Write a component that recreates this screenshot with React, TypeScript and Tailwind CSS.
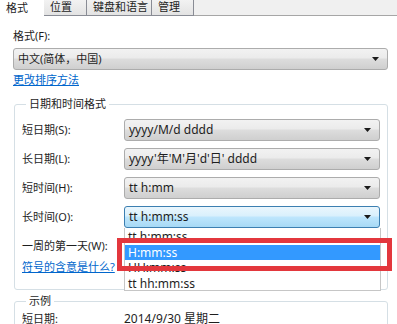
const font = { fontFamily: '"Noto Sans", "Noto Sans CJK SC", sans-serif' };

function Arrow() {
  return (
    <svg width="7" height="4" viewBox="0 0 7 4" className="shrink-0">
      <path d="M0 0H7L3.5 4Z" fill="#1a1a1a" />
    </svg>
  );
}

function Combo({ text, focused = false, cjk = false }: { text: string; focused?: boolean; cjk?: boolean }) {
  const skin = focused
    ? "border-[#3c7fb1] bg-[linear-gradient(#eaf6fd_0%,#d9f0fc_45%,#bee6fd_50%,#a7d9f5_100%)]"
    : "border-[#acacac] bg-[linear-gradient(#f2f2f2_0%,#ebebeb_45%,#dddddd_50%,#cfcfcf_100%)]";
  return (
    <div
      className={`flex h-[22px] flex-1 items-center rounded-[3px] border pl-[4px] pr-[8px] text-[#1e1e1e] ${cjk ? "text-[11px]" : "text-[12px]"} ${skin}`}
    >
      <span className="flex-1 whitespace-nowrap leading-[18px]">{text}</span>
      <Arrow />
    </div>
  );
}

function Row({ label, value, focused }: { label: string; value: string; focused?: boolean }) {
  return (
    <div className="flex h-[22px] items-center">
      <span className="w-[102px] text-[11px] text-[#1e1e1e]">{label}</span>
      <Combo text={value} focused={focused} />
    </div>
  );
}

function Tab({ label, width, active = false }: { label: string; width: string; active?: boolean }) {
  return active ? (
    <div className={`relative z-10 -mb-px flex h-[17px] items-center bg-white pl-[6px] text-[11px] text-[#1e1e1e] ${width}`}>
      {label}
    </div>
  ) : (
    <div
      className={`flex h-[16px] items-center border-r border-b border-[#898c95] bg-[linear-gradient(#f2f2f2,#e3e3e3)] pl-[6px] text-[11px] text-[#1e1e1e] ${width}`}
    >
      {label}
    </div>
  );
}

export default function App() {
  return (
    <div className="relative h-[324px] w-[397px] overflow-hidden bg-white" style={font}>
      <div className="flex h-[16px] border-b border-[#a6a6a6] bg-[#f0f0f0]">
        <Tab label="格式" width="w-[44px]" active />
        <Tab label="位置" width="w-[43px]" />
        <Tab label="键盘和语言" width="w-[65px]" />
        <Tab label="管理" width="w-[42px]" />
      </div>

      <div className="flex flex-col pr-[9px] pl-[13px]">
        <div className="mt-[12px] h-[16px] text-[11px] leading-[16px] text-[#1e1e1e]">格式(F):</div>
        <div className="mt-[4px] flex">
          <Combo text="中文(简体，中国)" cjk />
        </div>
        <div className="mt-[2px] h-[16px] text-[11px] leading-[16px] text-[#0066cc] underline">更改排序方法</div>

        <fieldset className="mt-[8px] ml-px rounded-[3px] border border-[#d5dfe5] px-[7px] pb-[14px]">
          <legend className="ml-[4px] h-[16px] px-[3px] text-[11px] leading-[16px] text-[#1e1e1e]">日期和时间格式</legend>
          <div className="mt-[7px] flex flex-col gap-[7px]">
            <Row label="短日期(S):" value="yyyy/M/d dddd" />
            <Row label="长日期(L):" value="yyyy'年'M'月'd'日' dddd" />
            <Row label="短时间(H):" value="tt h:mm" />
            <Row label="长时间(O):" value="tt h:mm:ss" focused />
            <Row label="一周的第一天(W):" value="星期一" />
          </div>
          <div className="mt-[2px] h-[16px] text-[11px] leading-[16px] text-[#0066cc] underline">符号的含意是什么?</div>
        </fieldset>

        <fieldset className="mt-[3px] ml-px rounded-[3px] border border-[#d5dfe5] px-[7px] pb-[10px]">
          <legend className="ml-[4px] h-[16px] px-[3px] text-[11px] leading-[16px] text-[#1e1e1e]">示例</legend>
          <div className="mt-[2px] flex h-[16px] items-center text-[11px] text-[#1e1e1e]">
            <span className="w-[102px]">短日期:</span>
            <span className="text-[12px]">2014/9/30 星期二</span>
          </div>
        </fieldset>
      </div>

      {/* open dropdown list */}
      <div className="absolute top-[228px] left-[124px] flex h-[63px] w-[257px] flex-col border border-t-0 border-[#c6c6c6] bg-white pt-px text-[12px] text-[#1e1e1e]">
        <div className="flex h-[16px] items-center pl-[3px]">tt h:mm:ss</div>
        <div className="flex h-[15px] items-center bg-[#3399ff] pl-[3px] text-white">H:mm:ss</div>
        <div className="flex h-[16px] items-center pl-[3px]">HH:mm:ss</div>
        <div className="flex h-[15px] items-center pl-[3px]">tt hh:mm:ss</div>
      </div>

      {/* red highlight frame */}
      <div className="absolute top-[238px] left-[117px] h-[33px] w-[275px] border-[5px] border-[#e3373d]" />
    </div>
  );
}
